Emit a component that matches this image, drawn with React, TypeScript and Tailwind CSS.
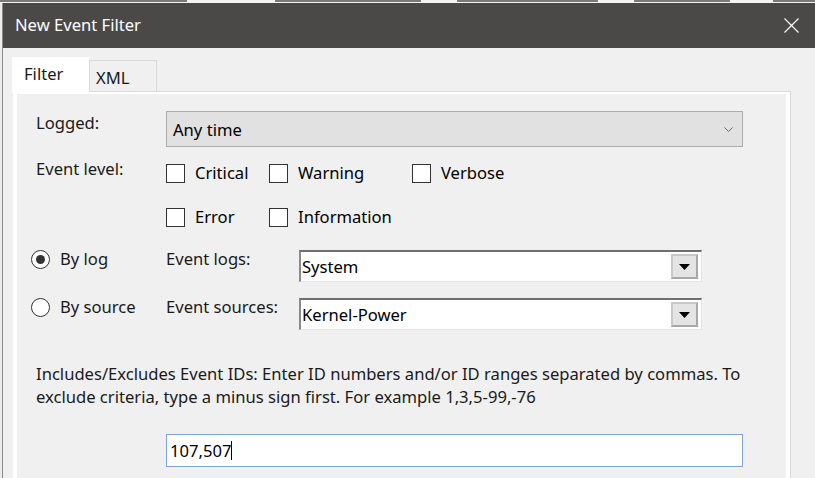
import { useState } from 'react';

function CheckBox({ label, width }: { label: string; width: string }) {
  return (
    <div className={`flex items-center h-[22px] ${width}`}>
      <span className="w-[19px] h-[19px] border border-[#333] bg-white shrink-0" />
      <span className="ml-[10px] text-[#000] whitespace-nowrap">{label}</span>
    </div>
  );
}

function Radio({ label, checked }: { label: string; checked?: boolean }) {
  return (
    <div className="flex items-center h-[22px] w-[135px]">
      <span className="w-[19px] h-[19px] rounded-full border border-[#333] bg-white flex items-center justify-center shrink-0">
        {checked && <span className="w-[9px] h-[9px] rounded-full bg-[#333]" />}
      </span>
      <span className="ml-[10px] whitespace-nowrap">{label}</span>
    </div>
  );
}

function ComboBox({ value }: { value: string }) {
  return (
    <div className="w-[403px] h-[32px] flex border-t-2 border-l-2 border-t-[#6f6f6f] border-l-[#8a8a8a] border-b border-r border-b-[#e3e3e3] border-r-[#e3e3e3] bg-white">
      <div className="flex-1 flex items-center pl-[1px] text-black whitespace-nowrap">{value}</div>
      <div className="my-[2px] mr-[3px] w-[27px] h-[25px] bg-[#e4e4e4] border-2 border-t-[#c9c9c9] border-l-[#c9c9c9] border-b-[#a8a8a8] border-r-[#a8a8a8] flex items-center justify-center">
        <svg width="11" height="6" viewBox="0 0 11 6">
          <path d="M0 0 H11 L5.5 6 Z" fill="#000" />
        </svg>
      </div>
    </div>
  );
}

export default function App() {
  const [ids, setIds] = useState('107,507');

  return (
    <div className="w-[815px] h-[478px] overflow-hidden flex flex-col bg-[#f0f0f0] font-['Noto_Sans',sans-serif] text-[16.6px] text-[#1a1a1a]">
      {/* window behind the dialog */}
      <div className="h-[3px] bg-[#f4f4f4] flex items-start shrink-0">
        <span className="w-[187px] h-[2px] bg-[#7a7a7a]" />
        <span className="w-[88px]" />
        <span className="w-[146px] h-[2px] bg-[#7a7a7a]" />
        <span className="w-[36px]" />
        <span className="w-[141px] h-[2px] bg-[#7a7a7a]" />
        <span className="w-[36px]" />
        <span className="w-[96px] h-[2px] bg-[#7a7a7a]" />
        <span className="w-[43px]" />
        <span className="w-[42px] h-[2px] bg-[#7a7a7a]" />
      </div>

      <div className="flex flex-1 min-h-0">
        <div className="w-[3px] shrink-0 flex">
          <span className="w-[2px] bg-[#ececec]" />
          <span className="w-[1px] bg-[#8c8c8c]" />
        </div>

        <div className="flex-1 flex flex-col min-w-0">
          {/* title bar */}
          <div className="h-[45px] bg-[#4a4947] flex items-center justify-between pl-[12px] pr-[16px] shrink-0">
            <span className="text-white text-[16.6px]">New Event Filter</span>
            <svg width="15" height="15" viewBox="0 0 15 15">
              <path d="M0.5 0.5 L14.5 14.5 M14.5 0.5 L0.5 14.5" stroke="#fff" strokeWidth="1.1" />
            </svg>
          </div>

          <div className="flex-1 bg-[#f0f0f0] pt-[9px] pl-[9px]">
            {/* tabs */}
            <div className="flex items-end">
              <div className="relative z-10 w-[77px] h-[36px] -mb-[2px] bg-white pl-[12px] pt-[5px]">Filter</div>
              <div className="w-[68px] h-[31px] border border-b-0 border-[#d9d9d9] pl-[6px] pt-[6px] leading-[22px]">XML</div>
            </div>

            {/* tab page */}
            <div className="ml-[1px] w-[778px] h-[400px] border-t border-r border-[#d9d9d9]">
              <div className="h-full border-l-4 border-t-2 border-r-4 border-white bg-[#f0f0f0] pl-[14px] pt-[17px] leading-[22px]">
                <div className="flex">
                  <div className="w-[135px] pl-[5px] pt-[1px]">Logged:</div>
                  <div className="w-[577px] h-[36px] bg-[#e1e1e1] border border-[#adadad] flex items-center justify-between pl-[6px] pr-[9px] pt-[1px] text-black">
                    <span>Any time</span>
                    <svg width="9" height="5" viewBox="0 0 9 5">
                      <path d="M0.5 0.5 L4.5 4.5 L8.5 0.5" fill="none" stroke="#6e6e6e" strokeWidth="1" />
                    </svg>
                  </div>
                </div>

                <div className="flex mt-[11px]">
                  <div className="w-[135px] pl-[5px]">Event level:</div>
                  <div className="pt-[4px]">
                    <div className="flex">
                      <CheckBox label="Critical" width="w-[103px]" />
                      <CheckBox label="Warning" width="w-[143px]" />
                      <CheckBox label="Verbose" width="w-[120px]" />
                    </div>
                    <div className="flex mt-[22px]">
                      <CheckBox label="Error" width="w-[103px]" />
                      <CheckBox label="Information" width="w-[143px]" />
                    </div>
                  </div>
                </div>

                <div className="flex mt-[22px]">
                  <div className="-mt-[2px] flex">
                    <Radio label="By log" checked />
                    <div className="w-[133px] h-[22px]">Event logs:</div>
                  </div>
                  <ComboBox value="System" />
                </div>

                <div className="flex mt-[16px]">
                  <div className="-mt-[2px] flex">
                    <Radio label="By source" />
                    <div className="w-[133px] h-[22px] whitespace-nowrap">Event sources:</div>
                  </div>
                  <ComboBox value="Kernel-Power" />
                </div>

                <p className="mt-[32px] pl-[5px] leading-[23px] whitespace-nowrap">
                  Includes/Excludes Event IDs: Enter ID numbers and/or ID ranges separated by commas. To
                  <br />
                  exclude criteria, type a minus sign first. For example 1,3,5-99,-76
                </p>

                <div className="mt-[26px] ml-[135px] w-[577px] h-[33px] bg-white border border-[#7aa5d6] flex items-center pl-[3px]">
                  <span className="text-black">{ids}</span>
                  <span className="w-[1px] h-[19px] bg-black" />
                  <input className="hidden" value={ids} onChange={(e) => setIds(e.target.value)} />
                </div>
              </div>
            </div>
          </div>
        </div>
      </div>
    </div>
  );
}
